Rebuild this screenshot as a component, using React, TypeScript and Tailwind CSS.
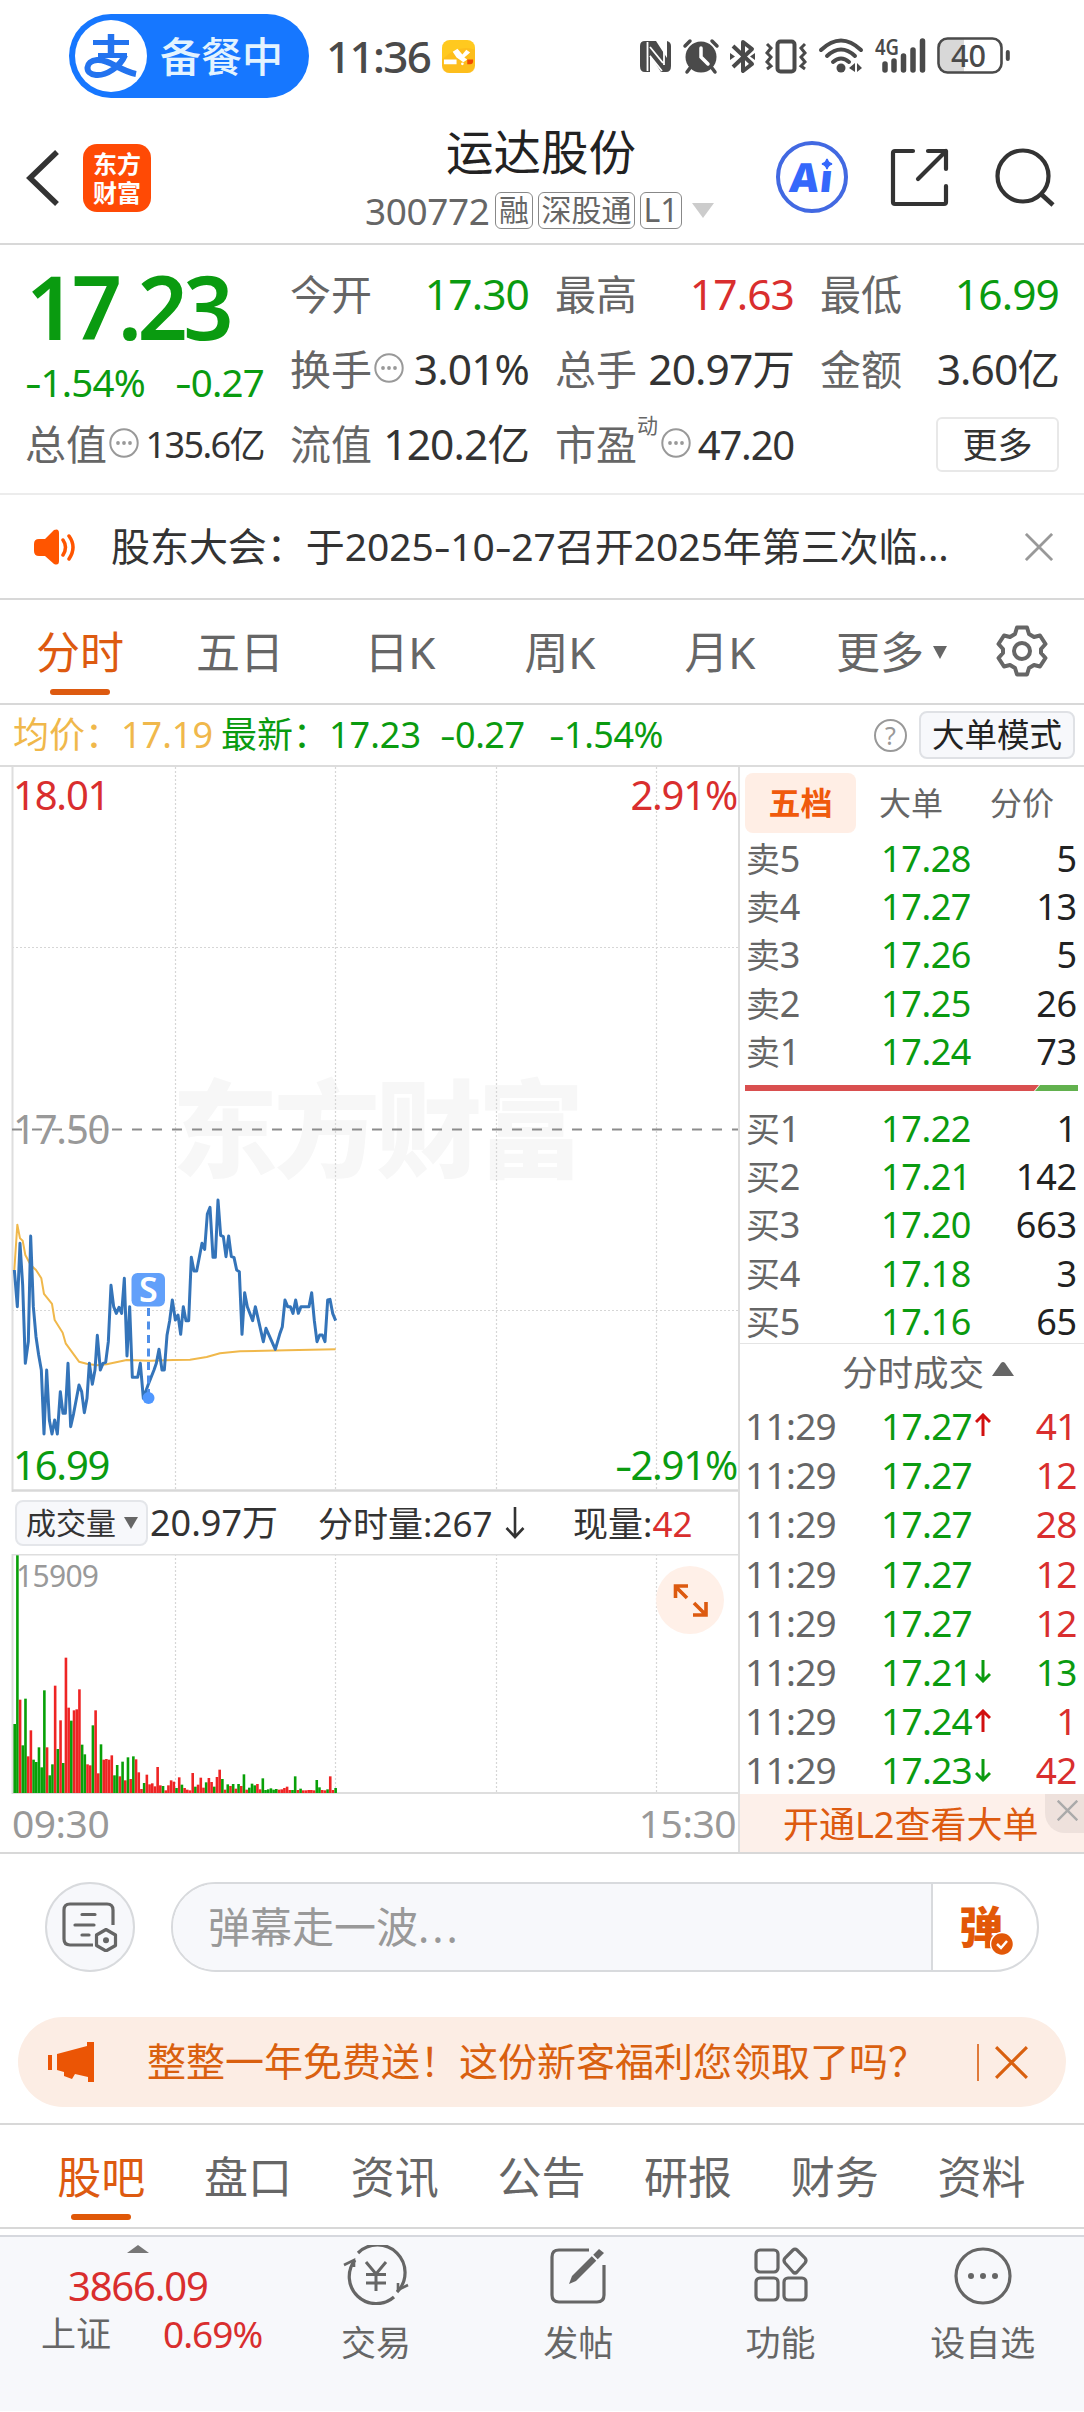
import React from "react";

const GREEN = "#0a9b10";
const RED = "#d92e2e";

/* Text whose hyphens are drawn wider than the font's own glyph. */
function Num({ children }: { children: string }) {
  return (
    <>
      {children.split(/(-)/).map((part, i) =>
        part === "-" ? (
          <span key={i} className="mx-[2px] inline-block scale-x-[1.35]">-</span>
        ) : (
          <React.Fragment key={i}>{part}</React.Fragment>
        ),
      )}
    </>
  );
}

function Dots({ className = "" }: { className?: string }) {
  return (
    <svg viewBox="0 0 30 30" className={"h-[30px] w-[30px] shrink-0 " + className}>
      <circle cx="15" cy="15" r="13.7" fill="none" stroke="#999" strokeWidth="2" />
      <g fill="#999">
        <circle cx="9" cy="15" r="1.9" />
        <circle cx="15" cy="15" r="1.9" />
        <circle cx="21" cy="15" r="1.9" />
      </g>
    </svg>
  );
}

function Cross({ className, width = 3 }: { className: string; width?: number }) {
  return (
    <svg viewBox="0 0 30 30" className={className}>
      <path d="M1 1L29 29M29 1L1 29" stroke="currentColor" strokeWidth={width} fill="none" />
    </svg>
  );
}

function StatusBar() {
  return (
    <div className="flex h-[112px] items-center pl-[69px] text-[#4a4a4a]">
      <div className="flex h-[84px] w-[240px] items-center rounded-full bg-[#1677ff] pl-[6px]">
        <svg viewBox="0 0 72 72" className="h-[72px] w-[72px] shrink-0">
          <circle cx="36" cy="36" r="36" fill="#fff" />
          <g fill="none" stroke="#2373ef">
            <path d="M18 22.500H54M23 35.500H52" strokeWidth="5" />
            <path d="M36 14V35" strokeWidth="6.500" />
            <path d="M50 35C45 47 31 56 21 55C9 54 10 41 22 40C34 39 45 51 61 54" strokeWidth="6" />
          </g>
        </svg>
        <span className="ml-[13px] text-[41px] leading-none font-medium text-[#e3f3ff]">备餐中</span>
      </div>
      <span className="ml-[17px] text-[44px] leading-none font-medium tracking-[-1.700px]">11:36</span>
      <svg viewBox="0 0 34 34" className="ml-[12px] h-[33px] w-[33px] shrink-0">
        <rect width="34" height="34" rx="8" fill="#ffc91f" />
        <path d="M0 20Q17 4 34 10V26Q34 34 26 34H8Q0 34 0 26Z" fill="#fbb41a" opacity=".5" />
        <path d="M2 20H15V25H2ZM11 12L16 9L21 15L25 10L29 13L23 18L26 20L22 23L15 18Z" fill="#fff" />
        <path d="M26 20H32V22Q32 25 29 25H26Z" fill="#f04a00" />
        <circle cx="21" cy="24.500" r="1.400" fill="#fff" />
      </svg>
      <div className="mr-[74px] ml-auto flex items-center">
        <svg viewBox="0 0 370 56" className="h-[56px] w-[370px]" fill="none">
          <g transform="translate(-640 -28)">
            <path d="M645 41H656L667 58V41Q671 42 671 46V66Q671 72 666 72H661L650 55V72H645Q640 72 640 66V46Q640 41 645 41Z" fill="#4a4a4a" />
            <path d="M647.5 42V71M650 47L663 63M650 56L662 71M664 42V65" stroke="#fff" strokeWidth="1.8" />
            <circle cx="701" cy="57" r="15.5" fill="#4a4a4a" />
            <path d="M685 46L690 41M717 46L712 41M690 68L687 72M712 68L715 72" stroke="#4a4a4a" strokeWidth="3.5" strokeLinecap="round" />
            <path d="M701 48V57L708 64" stroke="#fff" strokeWidth="3.5" strokeLinecap="round" />
            <path d="M733 46L752 64L743 71V42L752 49L733 67" stroke="#4a4a4a" strokeWidth="4" strokeLinejoin="round" />
            <path d="M730 53L735 56.5L730 60ZM755 53L750 56.5L755 60Z" fill="#4a4a4a" />
            <rect x="777.500" y="41.500" width="17" height="30" rx="3" stroke="#4a4a4a" strokeWidth="4" />
            <path d="M767 44L771 48L767 53L771 57L767 62L771 66L767 69M805 44L801 48L805 53L801 57L805 62L801 66L805 69" stroke="#4a4a4a" strokeWidth="3" />
            <path d="M821 50Q841 31 861 50M827 56Q841 43 855 56M833 62Q841 55 849 62" stroke="#4a4a4a" strokeWidth="4" strokeLinecap="round" />
            <circle cx="841" cy="68" r="4.500" fill="#4a4a4a" />
            <path d="M849 68L855 63V72ZM862 68L857 63V72Z" fill="#4a4a4a" />
            <path d="M885 64V70M894 61V70M903.500 56V70M913 50V70M922.500 41V70" stroke="#4a4a4a" strokeWidth="5.500" strokeLinecap="round" />
            <path d="M947 39H964V72H947Q940 72 940 65V46Q940 39 947 39Z" fill="#d8d8d8" />
            <rect x="938.500" y="38.500" width="63" height="34" rx="9" stroke="#4a4a4a" strokeWidth="2.600" />
            <path d="M1007.800 52V59" stroke="#4a4a4a" strokeWidth="4" strokeLinecap="round" />
            <text x="875" y="55" fontSize="21" fontWeight="600" textLength="24" lengthAdjust="spacingAndGlyphs" fill="#4a4a4a">4G</text>
            <text x="951" y="67" fontSize="31" fontWeight="500" textLength="35" lengthAdjust="spacingAndGlyphs" fill="#4a4a4a">40</text>
          </g>
        </svg>
      </div>
    </div>
  );
}

function Header() {
  return (
    <header className="flex h-[133px] items-start border-b-2 border-[#d8d8d8] text-[#333]">
      <svg viewBox="0 0 34 56" className="mt-[38px] ml-[26px] h-[56px] w-[34px] shrink-0">
        <path d="M31 2L4 28L31 54" fill="none" stroke="#333" strokeWidth="5.500" />
      </svg>
      <div className="mt-[32px] ml-[23px] flex h-[68px] w-[68px] shrink-0 flex-col items-center justify-center rounded-[14px] bg-[#ff4a05] text-[24px] leading-[29px] font-bold text-white">
        <span>东方</span>
        <span>财富</span>
      </div>
      <div className="ml-[214px] flex w-[352px] flex-col">
        <h1 className="mt-[12px] ml-[81px] text-[47.500px] leading-[56px] font-normal text-[#222]">运达股份</h1>
        <div className="mt-[11px] flex h-[38px] items-center text-[#666]">
          <span className="w-[130px] text-[37px] leading-none tracking-[-0.400px]">300772</span>
          <span className="flex h-[37px] w-[38px] items-center justify-center rounded-[6px] border border-[#888] text-[30px] leading-none">融</span>
          <span className="ml-[5px] flex h-[37px] w-[97px] items-center justify-center rounded-[6px] border border-[#888] text-[30px] leading-none">深股通</span>
          <span className="ml-[5px] flex h-[37px] w-[42px] items-center justify-center rounded-[6px] border border-[#888] text-[32px] leading-none">L1</span>
          <svg viewBox="0 0 22 15" className="ml-[10px] h-[15px] w-[22px]"><path d="M0 0H22L11 15Z" fill="#ccc" /></svg>
        </div>
      </div>
      <div className="relative mt-[29px] ml-[59px] flex h-[72px] w-[72px] shrink-0 items-center justify-center rounded-full border-4 border-[#4269e2] bg-white">
        <span className="-skew-x-6 text-[40px] leading-none font-black tracking-[1px] text-[#3568fb]">Ai</span>
        <svg viewBox="0 0 16 16" className="absolute top-[10px] left-[39px] h-[16px] w-[16px] bg-white">
          <path d="M8 4Q9 8 13 9Q9 10 8 14Q7 10 3 9Q7 8 8 4Z" fill="#3568fb" stroke="#3568fb" strokeWidth="1.500" />
        </svg>
      </div>
      <svg viewBox="0 0 60 60" className="mt-[36px] ml-[42px] h-[60px] w-[60px] shrink-0">
        <g fill="none" stroke="#333" strokeWidth="4.200" strokeLinecap="round" strokeLinejoin="round">
          <path d="M23 3H5Q3 3 3 5V54Q3 56 5 56H54Q56 56 56 54V38" />
          <path d="M38 3H56V21M56 3L28 31" />
        </g>
      </svg>
      <svg viewBox="0 0 64 64" className="mt-[36px] ml-[45px] h-[64px] w-[64px] shrink-0">
        <circle cx="28" cy="28" r="25.500" fill="none" stroke="#333" strokeWidth="4.200" />
        <path d="M46 46L58 57" stroke="#333" strokeWidth="4.600" />
      </svg>
    </header>
  );
}

type Stat = { label: string; value: string; tone?: string; dots?: boolean };
const stats: Stat[] = [
  { label: "今开", value: "17.30", tone: "text-[#0a9b10]" },
  { label: "最高", value: "17.63", tone: "text-[#d92e2e]" },
  { label: "最低", value: "16.99", tone: "text-[#0a9b10]" },
  { label: "换手", value: "3.01%", dots: true },
  { label: "总手", value: "20.97万" },
  { label: "金额", value: "3.60亿" },
  { label: "流值", value: "120.2亿" },
];

function StatCell({ s }: { s: Stat }) {
  return (
    <div className="flex h-[75px] items-center whitespace-nowrap">
      <span className="text-[41px] leading-none text-[#666]">{s.label}</span>
      {s.dots && <Dots className="mb-[4px] ml-[2px]" />}
      <span className={"ml-auto text-[42.500px] leading-none tracking-[-0.900px] " + (s.tone ?? "text-[#333]")}>{s.value}</span>
    </div>
  );
}

function Quote() {
  return (
    <section className="flex h-[250px] gap-[26px] border-b-2 border-[#ececec] px-[25px] pt-[12px]">
      <div className="flex w-[239px] shrink-0 flex-col text-[#0a9b10]">
        <div className="flex h-[98px] items-center pl-[1px] text-[88px] leading-none font-semibold tracking-[-4.500px]">17.23</div>
        <div className="mt-[2px] flex h-[50px] items-center justify-between text-[38.500px] leading-none tracking-[-0.800px]">
          <span><Num>-1.54%</Num></span>
          <span><Num>-0.27</Num></span>
        </div>
        <div className="flex h-[75px] items-center whitespace-nowrap">
          <span className="text-[41px] leading-none text-[#666]">总值</span>
          <Dots className="mb-[4px] ml-[2px]" />
          <span className="ml-auto text-[36px] leading-none tracking-[-1.600px] text-[#333]">135.6亿</span>
        </div>
      </div>
      <div className="grid flex-1 grid-cols-3 content-start gap-x-[26px]">
        {stats.map((s) => (
          <StatCell key={s.label} s={s} />
        ))}
        <div className="flex h-[75px] items-center whitespace-nowrap">
          <span className="text-[41px] leading-none text-[#666]">市盈</span>
          <span className="mb-[38px] text-[21px] leading-none text-[#666]">动</span>
          <Dots className="mb-[4px] ml-[3px]" />
          <span className="ml-auto text-[40px] leading-none tracking-[-1.200px] text-[#333]">47.20</span>
        </div>
        <div className="flex h-[75px] items-center justify-end">
          <button className="flex h-[55px] w-[123px] items-center justify-center rounded-[6px] border-2 border-[#e8e8e8] text-[35px] leading-none text-[#333]">更多</button>
        </div>
      </div>
    </section>
  );
}

function Notice() {
  return (
    <section className="flex h-[105px] items-center border-b-2 border-[#d8d8d8] text-[#333]">
      <svg viewBox="0 0 44 36" className="ml-[34px] h-[36px] w-[44px] shrink-0">
        <path d="M5 10H11L20 1Q25 -1 25 4V32Q25 37 20 35L11 27H5Q0 27 0 22V15Q0 10 5 10Z" fill="#ff5500" />
        <path d="M29 11Q34 18 29 26M35 7Q43 18 35 30" fill="none" stroke="#ff5500" strokeWidth="3.500" strokeLinecap="round" />
      </svg>
      <span className="mb-[2px] ml-[33px] w-[851px] text-[39px] leading-none tracking-[-0.050px] whitespace-nowrap"><Num>股东大会：于2025-10-27召开2025年第三次临...</Num></span>
      <Cross className="ml-[63px] h-[28px] w-[28px] text-[#999]" />
    </section>
  );
}

function PeriodTabs() {
  return (
    <nav className="flex h-[105px] border-b-2 border-[#d8d8d8] text-[44px] leading-none text-[#666]">
      {["分时", "五日", "日K", "周K", "月K"].map((t, i) => (
        <div key={t} className={"flex w-[160px] flex-col items-center pt-[30px] " + (i === 0 ? "text-[#dd5a10]" : "")}>
          <span>{t}</span>
          {i === 0 && <span className="mt-[15px] h-[6px] w-[60px] rounded-full bg-[#dd5a10]" />}
        </div>
      ))}
      <div className="flex h-[104px] flex-1 items-center pl-[36px]">
        <span>更多</span>
        <svg viewBox="0 0 14 13" className="ml-[9px] h-[13px] w-[14px]"><path d="M0 0H14L7 13Z" fill="#666" /></svg>
        <svg viewBox="0 0 52 52" className="mb-[2px] ml-[49px] h-[52px] w-[52px]" fill="none" stroke="#666" strokeWidth="4">
          <path d="M21 2.500H31L33 9L38 12L44 10.500L49.500 19L45 24V28L49.500 33L44 41.500L38 40L33 43L31 49.500H21L19 43L14 40L8 41.500L2.500 33L7 28V24L2.500 19L8 10.500L14 12L19 9Z" strokeLinejoin="round" />
          <circle cx="26" cy="26" r="8" />
        </svg>
      </div>
    </nav>
  );
}

function LegendRow() {
  return (
    <div className="flex h-[62px] items-center border-b-2 border-[#dcdcdc] pl-[13px] text-[36px] leading-none whitespace-nowrap text-[#0a9b10]">
      <span className="w-[108px] text-[#f0b84b]">均价：</span>
      <span className="w-[100px] text-[#f0b84b]">17.19</span>
      <span className="w-[108px]">最新：</span>
      <span className="w-[111px]">17.23</span>
      <span className="w-[109px] tracking-[-0.500px]"><Num>-0.27</Num></span>
      <span className="tracking-[-0.500px]"><Num>-1.54%</Num></span>
      <span className="ml-auto flex h-[33px] w-[33px] items-center justify-center rounded-full border-[2.500px] border-[#999] text-[25px] leading-none text-[#999]">?</span>
      <span className="mr-[9px] ml-[12px] flex h-[48px] w-[156px] items-center justify-center rounded-[8px] border-2 border-[#dfe1e5] bg-[#f7f8fb] text-[32.500px] leading-none text-[#222]">大单模式</span>
    </div>
  );
}

const PRICE =
  "43,360 52,470 60,280 68,405 76,640 85,575 92,258 100,470 108,560 116,615 124,660 132,852 140,660 148,810 156,852 164,810 172,852 181,725 189,790 196,790 204,640 212,830 221,790 237,705 245,725 253,788 261,745 268,640 277,703 285,660 292,556 301,660 309,640 317,637 325,575 333,406 341,470 349,490 357,472 365,490 373,385 381,618 389,470 397,682 413,682 421,640 430,745 446,700 462,660 469,640 477,598 486,660 493,660 501,556 509,512 517,450 526,510 534,495 542,553 550,470 558,512 566,512 574,322 582,363 590,363 606,280 614,298 622,192 630,172 639,322 646,322 654,150 662,256 670,260 678,320 686,258 694,320 702,322 710,360 718,365 726,553 734,428 742,470 758,512 766,470 790,575 798,535 826,598 839,553 847,530 855,450 863,470 871,470 879,490 887,450 895,490 903,470 927,470 935,428 943,512 951,575 959,555 967,555 975,575 983,450 990,448 998,490 1007,512";
const AVERAGE =
  "43,360 52,224 60,265 68,272 76,315 92,345 108,360 124,385 132,432 156,462 164,510 188,548 197,580 237,635 260,641 290,646 320,643 380,630 450,632 520,630 570,629 620,621 660,610 720,604 860,601 1007,598";

function PriceChart() {
  return (
    <div className="relative h-[725px] w-[738px]">
      <svg viewBox="0 0 738 725" className="block h-[725px] w-[738px]" fill="none">
        <text x="172" y="402" fontSize="106" fontWeight="900" textLength="412" fill="#f7f7f7">东方财富</text>
        <g stroke="#d6d6d6" strokeWidth="1.200" strokeDasharray="2 2">
          <path d="M175.500 0V723M335.500 0V723M496.500 0V723M656.500 0V723" />
          <path d="M12 180.500H738M12 543.500H738" />
        </g>
        <path d="M12.500 0V725" stroke="#dedede" strokeWidth="2" />
        <path d="M12 723.500H738" stroke="#d8d8d8" strokeWidth="2.500" />
        <path d="M12 362.500H738" stroke="#8c8c8c" strokeWidth="2.200" strokeDasharray="10 10" />
        <g transform="translate(0 383) scale(.33333)" strokeLinejoin="round">
          <polyline points={AVERAGE} stroke="#f0b84b" strokeWidth="6" />
          <polyline points={PRICE} stroke="#3474b9" strokeWidth="9" />
        </g>
        <rect x="131.500" y="506" width="33.500" height="33.500" rx="6" fill="#62a0fa" />
        <text x="148.300" y="534.500" fontSize="34" fontWeight="600" textAnchor="middle" fill="#fff">S</text>
        <path d="M148.500 541V632" stroke="#4f8fe8" strokeWidth="3" strokeDasharray="8 5.500" />
        <circle cx="148.500" cy="631" r="6" fill="#4f97ff" />
      </svg>
      <span className="absolute top-[8px] left-[13px] text-[40px] leading-[40px] tracking-[-1.200px] text-[#d92e2e]">18.01</span>
      <span className="absolute top-[8px] right-[1px] text-[40px] leading-[40px] tracking-[-1.200px] text-[#d92e2e]">2.91%</span>
      <span className="absolute top-[342px] left-[13px] text-[40px] leading-[40px] tracking-[-1.200px] text-[#999]">17.50</span>
      <span className="absolute top-[678px] left-[13px] text-[40px] leading-[40px] tracking-[-1.200px] text-[#0a9b10]">16.99</span>
      <span className="absolute top-[678px] right-[1px] text-[40px] leading-[40px] tracking-[-1.200px] text-[#0a9b10]"><Num>-2.91%</Num></span>
    </div>
  );
}

/* One entry per minute: positive = up (red), negative = down (green). */
const VOLUME = [
  -207, -713, 280, -143, -283, 110, 188, -100, -93, -137, -77, -308, 137, -53, -86, 322, -132, 218, -90, 406,
  256, -217, 248, 251, 311, -145, -116, 86, 83, -203, 248, 59, -146, 100, 102, 100, 113, -53, -84, 50,
  -94, 38, -107, 42, -110, 101, 62, 12, -30, 55, 26, 29, 20, 78, 23, -21, 8, 23, 38, 34,
  -15, 47, -25, 15, 10, 8, 60, -19, 25, 46, 16, -32, 45, 33, -19, 48, 70, -42, 10, -26,
  21, -27, 13, -27, 21, -56, 10, -16, -28, -23, 27, 11, -44, -9, -11, -14, -10, -12, 10, 11,
  15, 19, 9, -9, -50, 9, -13, 8, 8, 9, 9, 8, -39, -17, 9, 8, -11, 50, 9, -15,
];

function VolumeChart() {
  return (
    <div className="relative h-[240px] w-[738px]">
      <svg viewBox="0 0 738 240" className="block h-[240px] w-[738px]" fill="none">
        <path d="M175.500 0V239M335.500 0V239M496.500 0V239M656.500 0V239" stroke="#d6d6d6" strokeWidth="1.200" strokeDasharray="2 2" />
        <path d="M12 .7H738" stroke="#dedede" strokeWidth="1.500" />
        <path d="M12.500 0V240" stroke="#dedede" strokeWidth="2" />
        <path d="M12 239H738" stroke="#dedede" strokeWidth="2" />
        {VOLUME.map((v, i) => {
          const h = Math.abs(v) / 3;
          return <rect key={i} x={13.400 + i * 2.697} y={239 - h} width="2.600" height={h} fill={v > 0 ? "#ee2424" : "#08a008"} />;
        })}
      </svg>
      <span className="absolute top-[7px] left-[16px] text-[30px] leading-[30px] tracking-[-0.700px] text-[#999]">15909</span>
      <svg viewBox="0 0 68 68" className="absolute top-[12px] left-[656px] h-[68px] w-[68px]">
        <circle cx="34" cy="34" r="34" fill="#fff0e8" />
        <path d="M19.500 32V20H32M20 21L31 32M50 36V49H37M49 48L38 37" fill="none" stroke="#dd5a10" strokeWidth="3.600" />
      </svg>
    </div>
  );
}

function ChartColumn() {
  return (
    <div className="flex w-[738px] shrink-0 flex-col">
      <PriceChart />
      <div className="flex h-[62px] items-center pl-[15px] text-[35px] leading-none whitespace-nowrap text-[#333]">
        <span className="flex h-[46px] w-[133px] items-center rounded-[8px] border-2 border-[#e4e6ea] bg-[#f7f8fb] pl-[9px] text-[30px]">
          成交量
          <svg viewBox="0 0 14 12" className="ml-[8px] h-[12px] w-[14px]"><path d="M0 0H14L7 12Z" fill="#666" /></svg>
        </span>
        <span className="ml-[2px] w-[168px] text-[36px]">20.97万</span>
        <span className="w-[180px]">分时量:267</span>
        <svg viewBox="0 0 20 32" className="ml-[7px] h-[32px] w-[20px]"><path d="M10 0V30M1.500 21L10 30L18.500 21" fill="none" stroke="#333" strokeWidth="2.600" /></svg>
        <span className="ml-[48px]">现量:<span className="text-[#d92e2e]">42</span></span>
      </div>
      <VolumeChart />
      <div className="flex h-[58px] items-center justify-between pr-[2px] pb-[2px] pl-[12px] text-[39px] leading-none tracking-[-0.500px] text-[#999]">
        <span>09:30</span>
        <span>15:30</span>
      </div>
    </div>
  );
}

function OrderRow({ name, price, qty }: { name: string; price: string; qty: string }) {
  return (
    <div className="flex h-[48.200px] items-center pr-[7px] pl-[6px] text-[36px] leading-none">
      <span className="w-[135px] tracking-[-0.200px] text-[#666]"><span className="text-[34px]">{name[0]}</span>{name[1]}</span>
      <span className="tracking-[-0.400px] text-[#0a9b10]">{price}</span>
      <span className="ml-auto tracking-[-0.200px] text-[#222]">{qty}</span>
    </div>
  );
}

const sells = [["卖5", "17.28", "5"], ["卖4", "17.27", "13"], ["卖3", "17.26", "5"], ["卖2", "17.25", "26"], ["卖1", "17.24", "73"]];
const buys = [["买1", "17.22", "1"], ["买2", "17.21", "142"], ["买3", "17.20", "663"], ["买4", "17.18", "3"], ["买5", "17.16", "65"]];
const trades: [string, string, number][] = [
  ["17.27", "41", 1], ["17.27", "12", 0], ["17.27", "28", 0], ["17.27", "12", 0],
  ["17.27", "12", 0], ["17.21", "13", -1], ["17.24", "1", 1], ["17.23", "42", -1],
];

function BookColumn() {
  return (
    <aside className="flex flex-1 flex-col border-l-2 border-[#dedede]">
      <div className="mt-[6px] mb-[2px] flex h-[60px] items-center pl-[5px] text-[32px] leading-none text-[#666]">
        <span className="flex h-[60px] w-[111px] items-center justify-center rounded-[8px] bg-[#ffeee5] font-bold text-[#f05a0c]">五档</span>
        <span className="ml-[23px]">大单</span>
        <span className="ml-[47px]">分价</span>
      </div>
      {sells.map((r) => <OrderRow key={r[0]} name={r[0]} price={r[1]} qty={r[2]} />)}
      <svg viewBox="0 0 333 6" className="mt-[9px] mb-[14px] ml-[5px] h-[6px] w-[333px]">
        <path d="M0 0H294L289 6H0Z" fill="#d94f4f" />
        <path d="M295 0H333V6H290Z" fill="#62b14e" />
      </svg>
      {buys.map((r) => <OrderRow key={r[0]} name={r[0]} price={r[1]} qty={r[2]} />)}
      <div className="mt-[-3px] flex h-[58px] items-center justify-center border-t border-[#e4e4e4] text-[35.500px] leading-none text-[#666]">
        <span className="ml-[32px]">分时成交</span>
        <svg viewBox="0 0 22 14" className="mb-[6px] ml-[8px] h-[14px] w-[22px]"><path d="M0 14L9 1Q11 -1 13 1L22 14Z" fill="#666" /></svg>
      </div>
      {trades.map(([p, q, d], i) => (
        <div key={i} className="flex h-[49.200px] items-center pr-[7px] pl-[5px] text-[37px] leading-none">
          <span className="w-[136px] tracking-[-0.700px] text-[#666]">11:29</span>
          <span className="tracking-[-0.700px] text-[#0a9b10]">{p}</span>
          {d !== 0 && (
            <svg viewBox="0 0 16 24" className="ml-[3px] h-[24px] w-[16px]">
              <path d={d > 0 ? "M8 23V3M1 9L8 2L15 9" : "M8 1V21M1 15L8 22L15 15"} fill="none" stroke={d > 0 ? "#d10f0f" : GREEN} strokeWidth="3" />
            </svg>
          )}
          <span className="ml-auto tracking-[-0.500px]" style={{ color: q === "13" ? GREEN : RED }}>{q}</span>
        </div>
      ))}
      <div className="relative flex flex-1 items-center bg-[#fdf0ea] pt-[3px] pl-[43px] text-[36px] leading-none text-[#dd5a10]">
        开通L2查看大单
        <span className="absolute top-0 right-0 flex h-[39px] w-[39px] items-center justify-center rounded-bl-[20px] bg-[#eee1dc] pb-[6px] pl-[5px]">
          <Cross className="h-[21px] w-[21px] text-[#aaa]" width={3.500} />
        </span>
      </div>
    </aside>
  );
}

function BarrageRow() {
  return (
    <section className="flex h-[165px] items-start border-t-2 border-[#d8d8d8] pt-[28px] pl-[45px]">
      <div className="flex h-[90px] w-[90px] items-center justify-center rounded-full border-2 border-[#d8dadd] bg-[#f7f8fb]">
        <svg viewBox="0 0 56 50" className="h-[50px] w-[56px]" fill="none" stroke="#666" strokeWidth="3.200">
          <path d="M31 43H8Q2 43 2 37V8Q2 2 8 2H45Q51 2 51 8V23" />
          <path d="M20 12.500H33M13 23H32M20 33H27" strokeLinecap="round" />
          <path d="M44 27.500L53.500 33V43.500L44 49L34.500 43.500V33Z" strokeLinejoin="round" />
          <circle cx="44" cy="38.300" r="3" fill="#666" stroke="none" />
        </svg>
      </div>
      <div className="ml-[36px] flex h-[90px] w-[868px] items-center overflow-hidden rounded-full border-2 border-[#d8dadd] bg-white">
        <div className="flex h-full w-[760px] items-center border-r-2 border-[#d8dadd] bg-[#f7f8fb] pl-[35px] text-[42px] leading-none text-[#999]">
          弹幕走一波<span className="tracking-[3px]">...</span>
        </div>
        <div className="relative ml-[26px] text-[44px] leading-none font-black text-[#e25808]">
          弹
          <svg viewBox="0 0 24 24" className="absolute right-[-11px] bottom-[-7px] h-[24px] w-[24px]">
            <circle cx="12" cy="12" r="11.500" fill="#e25808" stroke="#fff" strokeWidth="1.500" />
            <path d="M7 12L11 16L17 9" fill="none" stroke="#fff" strokeWidth="2.500" />
          </svg>
        </div>
      </div>
    </section>
  );
}

function PromoBanner() {
  return (
    <section className="mx-[18px] flex h-[90px] items-center rounded-full bg-[#fcede4] text-[#d9600f]">
      <svg viewBox="0 0 48 40" className="ml-[29px] h-[40px] w-[48px]">
        <path d="M1 13H5V28H1ZM10 12L40 4V0H47V40H41V35L28 32L25 37L17 34V30L10 28Z" fill="#eb5505" />
      </svg>
      <span className="mb-[3px] ml-[52px] w-[830px] text-[39px] leading-none whitespace-nowrap">整整一年免费送！这份新客福利您领取了吗？</span>
      <span className="h-[37px] w-[2px] bg-[#e07a3a]" />
      <Cross className="ml-[16px] h-[33px] w-[33px]" width={2.800} />
    </section>
  );
}

function SectionTabs() {
  return (
    <nav className="mt-[16px] flex h-[106px] border-y-2 border-[#d8d8d8] pl-[28px] text-[44px] leading-none text-[#666]">
      {["股吧", "盘口", "资讯", "公告", "研报", "财务", "资料"].map((t, i) => (
        <div key={t} className={"flex w-[146.700px] shrink-0 flex-col items-center pt-[30px] " + (i === 0 ? "text-[#dd5a10]" : "")}>
          <span>{t}</span>
          {i === 0 && <span className="mt-[15px] h-[6px] w-[60px] rounded-full bg-[#e05808]" />}
        </div>
      ))}
    </nav>
  );
}

function BottomItem({ label, children }: { label: string; children: React.ReactNode }) {
  return (
    <div className="flex w-[202.400px] flex-col items-center pt-[8px]">
      <svg viewBox="0 0 66 60" className="h-[60px] w-[66px]" fill="none" stroke="#666" strokeWidth="3.200">
        {children}
      </svg>
      <span className="mt-[20px] text-[35px] leading-[36px] text-[#666]">{label}</span>
    </div>
  );
}

function BottomBar() {
  return (
    <footer className="mt-[6px] flex h-[176px] border-t-2 border-[#d6d8de] bg-[#f7f8fb]">
      <div className="flex w-[275px] flex-col">
        <svg viewBox="0 0 22 8" className="mt-[8px] ml-[127px] h-[8px] w-[22px]"><path d="M0 8L11 0L22 8Z" fill="#777" /></svg>
        <span className="mt-[11px] ml-[68px] text-[40px] leading-[44px] tracking-[-1.200px] text-[#d92e2e]">3866.09</span>
        <div className="mt-[6px] flex items-center pl-[41px] text-[35px] leading-[40px] text-[#666]">
          <span>上证</span>
          <span className="ml-[52px] text-[37px] tracking-[-1px] text-[#d92e2e]">0.69%</span>
        </div>
      </div>
      <BottomItem label="交易">
        <path d="M15 8A27 27 0 0 1 54 47M51 52A27 27 0 0 1 12 15" />
        <path d="M1 20L11 15V22M65 40L55 45V38" strokeWidth="2.600" />
        <path d="M23 17L33 29L43 17M33 29V46M23 29.500H43M23 38H43" strokeWidth="3" />
      </BottomItem>
      <BottomItem label="发帖">
        <path d="M44 5H14Q7 5 7 12V50Q7 57 14 57H52Q59 57 59 50V20" />
        <path d="M54 4L59 8L31 36L24 39L27 31Z" fill="#666" stroke="none" />
        <path d="M47 10L53 16" stroke="#f7f8fb" strokeWidth="2" />
      </BottomItem>
      <BottomItem label="功能">
        <rect x="8" y="5" width="22" height="22" rx="4" />
        <rect x="8" y="33" width="22" height="22" rx="4" />
        <rect x="36" y="33" width="22" height="22" rx="4" />
        <path d="M45 5Q47 3 49 5L57 13Q59 15.500 57 18L49 27Q47 29 45 27L37 18Q35 15.500 37 13Z" />
      </BottomItem>
      <BottomItem label="设自选">
        <circle cx="33" cy="31" r="27" />
        <g fill="#666" stroke="none">
          <circle cx="21" cy="31" r="3" />
          <circle cx="33" cy="31" r="3" />
          <circle cx="45" cy="31" r="3" />
        </g>
      </BottomItem>
    </footer>
  );
}

export default function App() {
  return (
    <div className="h-[2412px] w-[1084px] overflow-hidden bg-white font-['Noto_Sans','Noto_Sans_CJK_SC',sans-serif]">
      <StatusBar />
      <Header />
      <Quote />
      <Notice />
      <PeriodTabs />
      <LegendRow />
      <main className="flex h-[1085px]">
        <ChartColumn />
        <BookColumn />
      </main>
      <BarrageRow />
      <PromoBanner />
      <SectionTabs />
      <BottomBar />
    </div>
  );
}
